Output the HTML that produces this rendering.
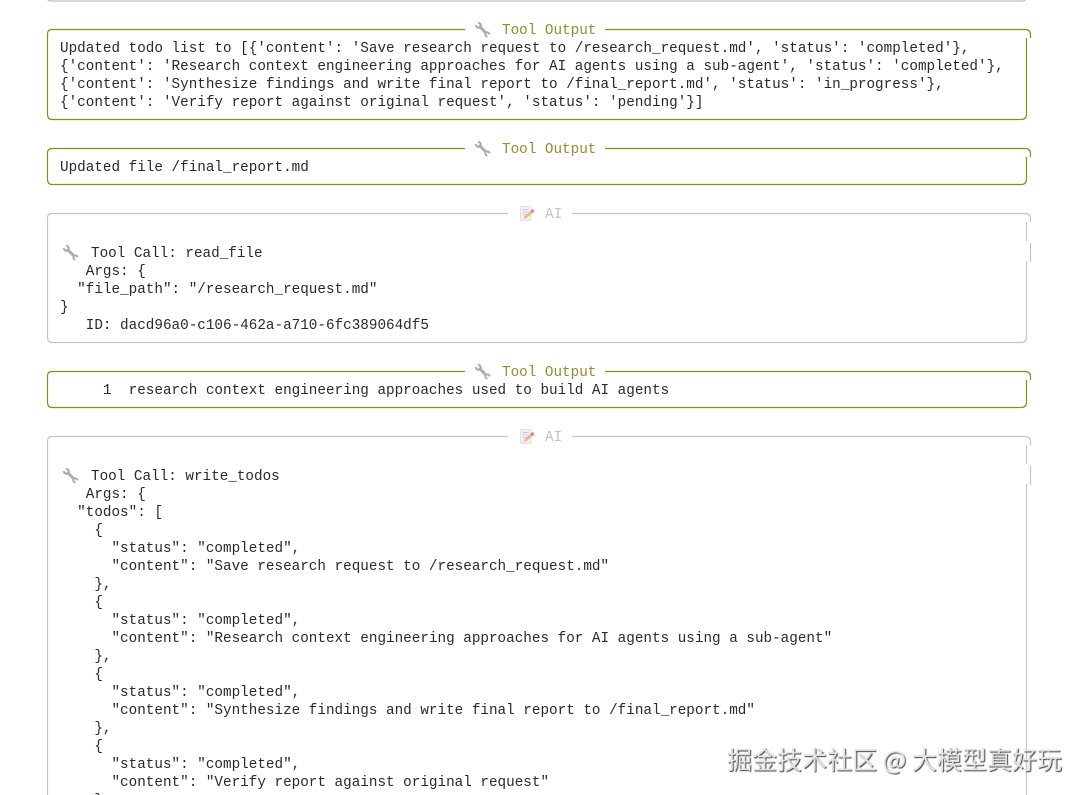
<!DOCTYPE html>
<html><head><meta charset="utf-8">
<style>
html,body{margin:0;padding:0;background:#fff;width:1085px;height:795px;overflow:hidden}
#p{position:relative;width:1085px;height:795px;overflow:hidden}
pre{position:absolute;left:60px;margin:0;font:14.3px/18px "Liberation Mono",monospace;color:#2a2a2a}
.t{position:absolute;font:14.3px/18px "Liberation Mono",monospace;white-space:pre}
.o{color:#8f8f2e;left:502px}
.a{color:#c4c4c4;left:545px}
svg{position:absolute;left:0;top:0}
#w{position:absolute;left:727px;top:743px;font:25px/32px "Noto Sans CJK SC","Liberation Sans",sans-serif;color:#e2e2e2;text-shadow:1px 1px 1px #444;white-space:pre}
</style></head><body><div id="p">
<svg width="1085" height="795" fill="none">
<defs>
<g id="wr"><path d="M4 4 L11.5 11.5" stroke="#adadad" stroke-width="3"/><path d="M0.6 3 Q1.6 6.6 5.4 5.6 M3 0.6 Q6.6 1.6 5.6 5.4 M10 10.6 Q13.6 9.6 14.8 12.4 M10.6 10 Q9.6 13.6 12.4 14.8" stroke="#adadad" stroke-width="2"/></g>
<g id="ai" opacity=".8"><rect x="0.5" y="0.5" width="10" height="14" rx="1" fill="#eef0fa" stroke="#d8d8e8"/><path d="M2.5 3.5H8.5M2.5 6H8.5M2.5 8.5H6" stroke="#b8bcd8"/><path d="M3.5 13 L5 9.5 L11 4.5 L13 6.5 L7 11.8Z" fill="#f2a65a"/><rect x="11" y="3.5" width="3" height="3" fill="#e8577a" transform="rotate(40 12.5 5)"/></g>
</defs>
<!-- top fragment -->
<path d="M47 -4V-3Q47 1 51 1H1022Q1026 1 1026 -3" stroke="#c0c0c0" stroke-width="1.3"/>
<!-- box 1 -->
<g stroke="#8a8a14" stroke-width="1.2">
<path d="M465 29.5H52Q47.5 29.5 47.5 34V114Q47.5 119.5 52 119.5H1021Q1026.5 119.5 1026.5 114V38"/>
<path d="M605 29.5H1025Q1030.5 29.5 1030.5 35V38"/>
<!-- box 2 -->
<path d="M465 148.5H52Q47.5 148.5 47.5 153V179Q47.5 184.5 52 184.5H1021Q1026.5 184.5 1026.5 179V157"/>
<path d="M605 148.5H1025Q1030.5 148.5 1030.5 154V157"/>
<!-- box 4 -->
<path d="M465 371.5H52Q47.5 371.5 47.5 376V402Q47.5 407.5 52 407.5H1021Q1026.5 407.5 1026.5 402V380"/>
<path d="M605 371.5H1025Q1030.5 371.5 1030.5 377V380"/>
</g>
<g stroke="#c4c4c4" stroke-width="1.2">
<!-- AI box 1 -->
<path d="M508 213.5H52Q47.5 213.5 47.5 218V337Q47.5 342.5 52 342.5H1021Q1026.5 342.5 1026.5 337V261"/>
<path d="M572 213.5H1025Q1030.5 213.5 1030.5 219V222"/>
<path d="M1026.5 222V241M1030.5 243V262"/>
<!-- AI box 2 -->
<path d="M508 436.5H52Q47.5 436.5 47.5 441V800M1026.5 800V484"/>
<path d="M572 436.5H1025Q1030.5 436.5 1030.5 442V445"/>
<path d="M1026.5 445V464M1030.5 466V485"/>
</g>
<use href="#wr" x="475" y="22"/>
<use href="#wr" x="475" y="141"/>
<use href="#wr" x="475" y="364"/>
<use href="#wr" x="63" y="245"/>
<use href="#wr" x="63" y="468"/>
<use href="#ai" x="520" y="206"/>
<use href="#ai" x="520" y="429"/>
</svg>
<div class="t o" style="top:22px">Tool Output</div>
<div class="t o" style="top:141px">Tool Output</div>
<div class="t o" style="top:364px">Tool Output</div>
<div class="t a" style="top:206px">AI</div>
<div class="t a" style="top:429px">AI</div>
<pre style="top:40px">Updated todo list to [{'content': 'Save research request to /research_request.md', 'status': 'completed'},
{'content': 'Research context engineering approaches for AI agents using a sub-agent', 'status': 'completed'},
{'content': 'Synthesize findings and write final report to /final_report.md', 'status': 'in_progress'},
{'content': 'Verify report against original request', 'status': 'pending'}]</pre>
<pre style="top:159px">Updated file /final_report.md</pre>
<pre style="top:245px;left:91px">Tool Call: read_file</pre>
<pre style="top:263px">   Args: {
  "file_path": "/research_request.md"
}
   ID: dacd96a0-c106-462a-a710-6fc389064df5</pre>
<pre style="top:382px">     1  research context engineering approaches used to build AI agents</pre>
<pre style="top:468px;left:91px">Tool Call: write_todos</pre>
<pre style="top:486px">   Args: {
  "todos": [
    {
      "status": "completed",
      "content": "Save research request to /research_request.md"
    },
    {
      "status": "completed",
      "content": "Research context engineering approaches for AI agents using a sub-agent"
    },
    {
      "status": "completed",
      "content": "Synthesize findings and write final report to /final_report.md"
    },
    {
      "status": "completed",
      "content": "Verify report against original request"
    },</pre>
<div id="w">掘金技术社区 @ 大模型真好玩</div>
</div></body></html>
